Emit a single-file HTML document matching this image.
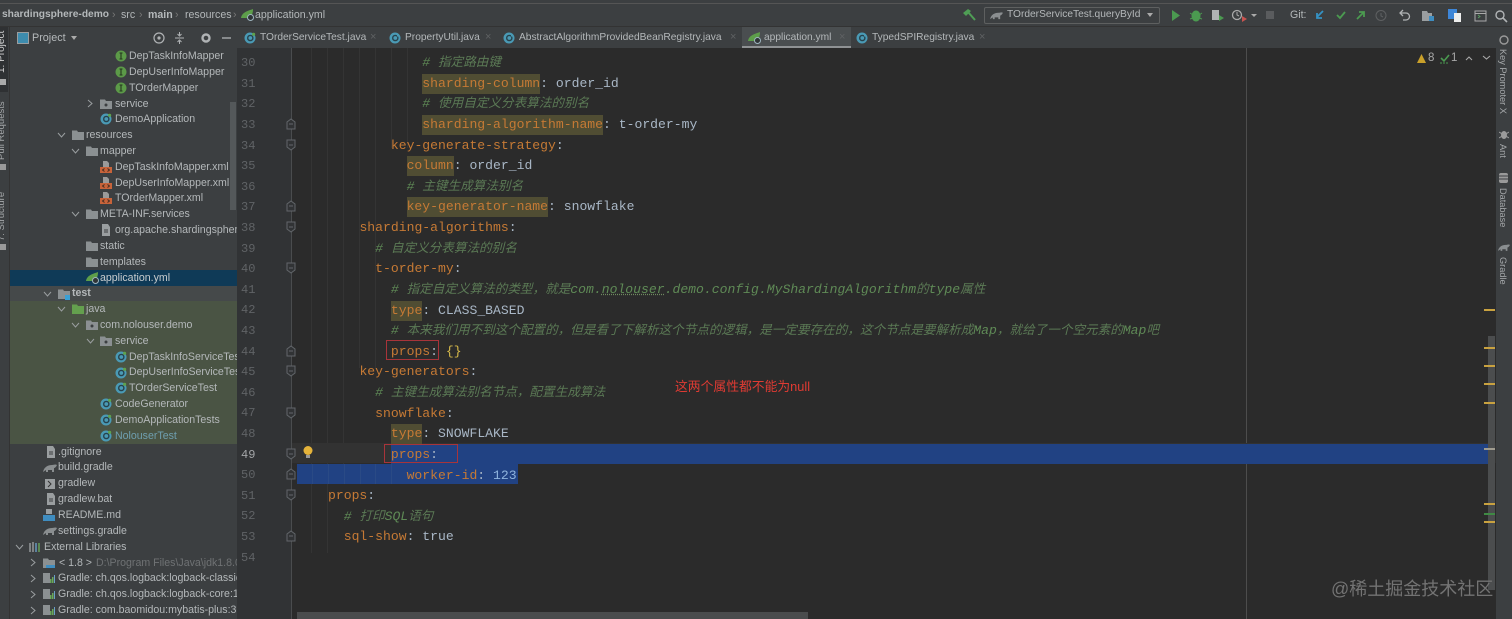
<!DOCTYPE html>
<html><head><meta charset="utf-8">
<style>
html,body{margin:0;padding:0;background:#3c3f41}
#a{position:relative;width:1512px;height:619px;overflow:hidden;background:#3c3f41;font-family:"Liberation Sans","Noto Sans CJK SC",sans-serif;filter:blur(.35px)}
.b{position:absolute}
.t{position:absolute;white-space:pre;font-size:10.6px;color:#b4b8ba;line-height:16px;height:16px}
.n{position:absolute;left:241px;font:12px/20px "Liberation Mono",monospace;color:#606366;width:20px;margin-top:1px}
#code{position:absolute;left:328px;top:53px;font:13.1px/20.625px "Liberation Mono","Noto Sans CJK SC",monospace;color:#a9b7c6}
#code div{height:20.625px;white-space:pre}
.k{color:#c67a35}
.h{background:#504d33;display:inline-block;height:20px;line-height:20px}
#code .c{color:#5f8a56;font-style:italic;position:relative;top:-2px}
.c i{font-size:12.6px;color:#5b7a55;font-family:"Noto Sans CJK SC",sans-serif}
.c u{text-decoration:underline dotted #6f8a60}
.g{position:absolute;width:1px;background:#343434;top:48px}
.r{position:absolute;border:1px solid #a8343a;box-sizing:border-box}
.m{position:absolute;left:1484px;width:11px;height:1.5px;background:#c9a240}
.v{position:absolute;transform-origin:0 0;white-space:pre;font-size:9.2px;color:#a5a8aa}
.x{position:absolute;top:31px;font-size:11px;color:#5f6163;line-height:12px}
.tb{font-size:10.2px}
</style></head><body><div id="a">
<svg width="0" height="0" style="position:absolute"><defs>
<symbol id="ci" viewBox="0 0 12 12"><circle cx="6" cy="6" r="5.5" fill="#4a9ab5"/><circle cx="6.3" cy="6" r="2.6" fill="none" stroke="#27424c" stroke-width="1.4"/><path d="M8 1.5l2 3h-2z" fill="#4a9ab5"/></symbol>
<symbol id="cg" viewBox="0 0 12 12"><circle cx="6" cy="6" r="5.5" fill="#4a9ab5"/><circle cx="6.3" cy="6" r="2.6" fill="none" stroke="#27424c" stroke-width="1.4"/><circle cx="9.6" cy="2.3" r="1.6" fill="#5ea24c"/></symbol>
<symbol id="ii" viewBox="0 0 12 12"><circle cx="6" cy="6" r="5.5" fill="#5c9a48"/><path d="M6 3v6M4.5 3h3M4.5 9h3" stroke="#25371f" stroke-width="1.1" fill="none"/></symbol>
<symbol id="fo" viewBox="0 0 12 12"><path d="M0 1.5h5l1 1.5h6v8H0z" fill="#8b9092"/></symbol>
<symbol id="pk" viewBox="0 0 12 12"><path d="M0 1.5h5l1 1.5h6v8H0z" fill="#8b9092"/><circle cx="6" cy="7" r="1.5" fill="#3c3f41"/></symbol>
<symbol id="xm" viewBox="0 0 12 12"><path d="M3 0h4l2 2v4H3z" fill="#9a9a9a"/><rect y="6" width="12" height="6" fill="#c8633a"/><path d="M4.5 7.5L2.5 9l2 1.5M7.5 7.5l2 1.5-2 1.5" stroke="#3c2a20" fill="none" stroke-width=".9"/></symbol>
<symbol id="sp" viewBox="0 0 14 12"><path d="M0 9C1 3 7 2 12 0c0 4-1 7-4 9H3z" fill="#5d9e4a"/><circle cx="9.5" cy="8.5" r="3" fill="#2f3436" stroke="#9fb6c0"/></symbol>
<symbol id="gr" viewBox="0 0 14 12"><path d="M0 10C1 5 5 3 9 3c2 0 3-1 5 0-1 2-2 3-3 3v4H9V8H5v2H3V8z" fill="#8a8e90"/></symbol>
<symbol id="fl" viewBox="0 0 12 12"><path d="M2 0h6l2 3v9H2z" fill="#9a9ea0"/><path d="M4 6h4M4 8h4" stroke="#3c3f41"/></symbol>
<symbol id="lib" viewBox="0 0 12 12"><path d="M0 1h7v10H0z" fill="#8b9092"/><path d="M7 7h1.5v4H7zM9 5h1.5v6H9z" fill="#6aa85a"/><path d="M11 3h1v8h-1z" fill="#6aa0c8"/></symbol>
</defs></svg>

<!-- top -->
<div class="b" style="left:0;top:3px;width:1512px;height:1px;background:#555"></div>
<div class="b" style="left:0;top:26px;width:1512px;height:1px;background:#333"></div>
<div class="t" style="left:2px;top:7px;font-weight:bold;font-size:10.2px">shardingsphere-demo</div>
<div class="t" style="left:112px;top:7px;color:#777">›</div>
<div class="t" style="left:121px;top:7px">src</div>
<div class="t" style="left:139px;top:7px;color:#777">›</div>
<div class="t" style="left:148px;top:7px;font-weight:bold">main</div>
<div class="t" style="left:175px;top:7px;color:#777">›</div>
<div class="t" style="left:185px;top:7px">resources</div>
<div class="t" style="left:233px;top:7px;color:#777">›</div>
<svg class="b" style="left:241px;top:9px" width="14" height="12"><use href="#sp"/></svg>
<div class="t" style="left:255px;top:7px">application.yml</div>

<svg class="b" style="left:962px;top:8px" width="14" height="13" viewBox="0 0 14 13"><path d="M1 5l5-4 3 2-5 5z" fill="#4f9e55"/><path d="M6 4l7 8" stroke="#4f9e55" stroke-width="2" fill="none"/></svg>
<div class="b" style="left:984px;top:7px;width:176px;height:17px;border:1px solid #5e6060;box-sizing:border-box;border-radius:2px"></div>
<svg class="b" style="left:990px;top:10px" width="13" height="11"><use href="#gr"/></svg>
<div class="t" style="left:1007px;top:7px;font-size:10.2px">TOrderServiceTest.queryById</div>
<div class="b" style="left:1147px;top:13px;border:3.5px solid transparent;border-top:4px solid #aaa"></div>
<svg class="b" style="left:1170px;top:8px" width="340" height="15" viewBox="0 0 340 15">
<path d="M2 2l8 5.5L2 13z" fill="#4b9a50"/>
<ellipse cx="26" cy="8" rx="4.5" ry="5.5" fill="#4b9a50"/><path d="M20 5l3 2M32 5l-3 2M20 11l3-1M32 11l-3-1" stroke="#4b9a50"/>
<path d="M42 2h7v10h-7z" fill="#b0b3b5"/><path d="M49 7l5 3-5 3z" fill="#4b9a50"/>
<circle cx="67" cy="7" r="4.5" fill="none" stroke="#aaa" stroke-width="1.3"/><path d="M67 4v3l2 1" stroke="#aaa" fill="none"/><path d="M72 8l5 3-5 3z" fill="#c75450"/><path d="M81 6h6l-3 3z" fill="#aaa"/>
<rect x="96" y="3" width="8" height="8" fill="#5a5c5e"/>
<path d="M153 3l-6 6M147 5v5h5" stroke="#3592c4" stroke-width="1.8" fill="none"/>
<path d="M167 7l3 3 5-6" stroke="#4b9a50" stroke-width="1.8" fill="none"/>
<path d="M187 11l7-7M189 4h5v5" stroke="#4b9a50" stroke-width="1.8" fill="none"/>
<circle cx="211" cy="7.5" r="5" fill="none" stroke="#5e6062"/><path d="M211 5v3l2 1" stroke="#5e6062" fill="none"/>
<path d="M231 5h5a3.5 3.5 0 0 1 0 7h-3M233 2l-3 3 3 3" stroke="#b0b3b5" stroke-width="1.3" fill="none"/>
<path d="M252 3h5l1 2h4v8h-10z" fill="#9a9ea0"/><rect x="259" y="8" width="5" height="5" fill="#3f8dc0"/>
<rect x="278" y="1" width="9" height="10" fill="#3d86d8"/><rect x="284" y="5" width="7" height="9" fill="#eee"/>
<rect x="305" y="3" width="11" height="10" fill="none" stroke="#aaa"/><path d="M305 5.5h11" stroke="#aaa"/><path d="M308 7l2 1.5-2 1.5" stroke="#5a9a60" fill="none"/>
<circle cx="330" cy="7" r="4" fill="none" stroke="#b0b3b5" stroke-width="1.4"/><path d="M333 10l4 4" stroke="#b0b3b5" stroke-width="1.6"/>
</svg>
<div class="t" style="left:1290px;top:7px;font-size:10.6px">Git:</div>

<!-- tabs -->
<div class="b" style="left:237px;top:27px;width:1259px;height:21px;background:#3c3f41"></div>
<div class="b" style="left:742px;top:27px;width:109px;height:19px;background:#4a4e50"></div>
<div class="b" style="left:742px;top:46px;width:109px;height:2px;background:#8f9294"></div>
<svg class="b" style="left:244px;top:32px" width="12" height="12"><use href="#cg"/></svg>
<div class="t tb" style="left:260px;top:30px">TOrderServiceTest.java</div><div class="x" style="left:370px">×</div>
<svg class="b" style="left:389px;top:32px" width="12" height="12"><use href="#ci"/></svg>
<div class="t tb" style="left:405px;top:30px">PropertyUtil.java</div><div class="x" style="left:485px">×</div>
<svg class="b" style="left:503px;top:32px" width="12" height="12"><use href="#ci"/></svg>
<div class="t tb" style="left:519px;top:30px">AbstractAlgorithmProvidedBeanRegistry.java</div><div class="x" style="left:730px">×</div>
<svg class="b" style="left:748px;top:32px" width="14" height="12"><use href="#sp"/></svg>
<div class="t tb" style="left:764px;top:30px">application.yml</div><div class="x" style="left:839px">×</div>
<svg class="b" style="left:856px;top:32px" width="12" height="12"><use href="#ci"/></svg>
<div class="t tb" style="left:872px;top:30px">TypedSPIRegistry.java</div><div class="x" style="left:979px">×</div>

<!-- left strip -->
<div class="b" style="left:0;top:27px;width:8px;height:65px;background:#2f3133"></div>
<div class="b" style="left:9px;top:27px;width:1px;height:592px;background:#333"></div>
<div class="v" style="left:-4px;top:73px;transform:rotate(-90deg);color:#d0d0d0;font-size:10px">1: Project</div>
<div class="b" style="left:0;top:79px;width:6px;height:6px;background:#aaa"></div>
<div class="v" style="left:-4px;top:160px;transform:rotate(-90deg);font-size:9.5px">Pull Requests</div>
<div class="b" style="left:0;top:164px;width:6px;height:6px;background:#999"></div>
<div class="v" style="left:-4px;top:241px;transform:rotate(-90deg);font-size:9.5px">7: Structure</div>
<div class="b" style="left:0;top:244px;width:6px;height:6px;background:#999"></div>

<!-- project header -->
<div class="b" style="left:10px;top:27px;width:227px;height:21px;background:#3c3f41"></div>
<div class="b" style="left:17px;top:32px;width:10px;height:10px;border:1px solid #9a9ea0;background:#3d8cae;box-sizing:content-box"></div>
<div class="t" style="left:32px;top:30px;font-size:10.8px">Project</div>
<div class="b" style="left:71px;top:36px;border:3px solid transparent;border-top:4px solid #aaa"></div>
<svg class="b" style="left:152px;top:31px" width="84" height="14" viewBox="0 0 84 14">
<circle cx="7" cy="7" r="5" fill="none" stroke="#b0b3b5" stroke-width="1.2"/><circle cx="7" cy="7" r="1.6" fill="#b0b3b5"/>
<path d="M23 7h9M27.5 1v3M25.5 3l2 2 2-2M27.5 13v-3M25.5 11l2-2 2 2" stroke="#b0b3b5" fill="none"/>
<circle cx="54" cy="7" r="3.5" fill="none" stroke="#b0b3b5" stroke-width="2.4"/>
<path d="M70 7h9" stroke="#b0b3b5" stroke-width="1.3"/>
</svg>

<!-- tree backgrounds -->
<div class="b" style="left:10px;top:270px;width:227px;height:16px;background:#0f3a57"></div>
<div class="b" style="left:10px;top:286px;width:227px;height:15px;background:#45494a"></div>
<div class="b" style="left:10px;top:301px;width:227px;height:143px;background:#4a5444"></div>
<div class="b" style="left:230px;top:102px;width:6px;height:108px;background:#54585a"></div>

<!-- tree -->
<svg class="b" style="left:115px;top:50px" width="12" height="12"><use href="#ii"/></svg><div class="t" style="left:129px;top:48px">DepTaskInfoMapper</div>
<svg class="b" style="left:115px;top:66px" width="12" height="12"><use href="#ii"/></svg><div class="t" style="left:129px;top:64px">DepUserInfoMapper</div>
<svg class="b" style="left:115px;top:82px" width="12" height="12"><use href="#ii"/></svg><div class="t" style="left:129px;top:80px">TOrderMapper</div>
<svg class="b" style="left:86px;top:99px" width="8" height="9"><path d="M2 1l4 3.5L2 8" stroke="#9a9ea0" fill="none"/></svg>
<svg class="b" style="left:100px;top:98px" width="12" height="12"><use href="#pk"/></svg><div class="t" style="left:115px;top:96px">service</div>
<svg class="b" style="left:100px;top:113px" width="12" height="12"><use href="#cg"/></svg><div class="t" style="left:115px;top:111px">DemoApplication</div>
<svg class="b" style="left:57px;top:131px" width="9" height="8"><path d="M1 2l3.5 4L8 2" stroke="#9a9ea0" fill="none"/></svg>
<svg class="b" style="left:72px;top:129px" width="12" height="12"><use href="#fo"/></svg><div class="t" style="left:86px;top:127px">resources</div>
<svg class="b" style="left:71px;top:147px" width="9" height="8"><path d="M1 2l3.5 4L8 2" stroke="#9a9ea0" fill="none"/></svg>
<svg class="b" style="left:86px;top:145px" width="12" height="12"><use href="#fo"/></svg><div class="t" style="left:100px;top:143px">mapper</div>
<svg class="b" style="left:100px;top:161px" width="12" height="12"><use href="#xm"/></svg><div class="t" style="left:115px;top:159px">DepTaskInfoMapper.xml</div>
<svg class="b" style="left:100px;top:177px" width="12" height="12"><use href="#xm"/></svg><div class="t" style="left:115px;top:175px">DepUserInfoMapper.xml</div>
<svg class="b" style="left:100px;top:192px" width="12" height="12"><use href="#xm"/></svg><div class="t" style="left:115px;top:190px">TOrderMapper.xml</div>
<svg class="b" style="left:71px;top:210px" width="9" height="8"><path d="M1 2l3.5 4L8 2" stroke="#9a9ea0" fill="none"/></svg>
<svg class="b" style="left:86px;top:208px" width="12" height="12"><use href="#fo"/></svg><div class="t" style="left:100px;top:206px">META-INF.services</div>
<svg class="b" style="left:100px;top:224px" width="12" height="12"><use href="#fl"/></svg><div class="t" style="left:115px;top:222px;width:122px;overflow:hidden">org.apache.shardingsphere</div>
<svg class="b" style="left:86px;top:240px" width="12" height="12"><use href="#fo"/></svg><div class="t" style="left:100px;top:238px">static</div>
<svg class="b" style="left:86px;top:256px" width="12" height="12"><use href="#fo"/></svg><div class="t" style="left:100px;top:254px">templates</div>
<svg class="b" style="left:86px;top:272px" width="14" height="12"><use href="#sp"/></svg><div class="t" style="left:100px;top:270px;color:#c8ccce">application.yml</div>
<svg class="b" style="left:43px;top:290px" width="9" height="8"><path d="M1 2l3.5 4L8 2" stroke="#9a9ea0" fill="none"/></svg>
<svg class="b" style="left:58px;top:288px" width="12" height="12"><use href="#fo"/><rect x="7" y="7" width="5" height="5" fill="#3aa0d5"/></svg><div class="t" style="left:72px;top:285px;font-weight:bold">test</div>
<svg class="b" style="left:57px;top:305px" width="9" height="8"><path d="M1 2l3.5 4L8 2" stroke="#9a9ea0" fill="none"/></svg>
<svg class="b" style="left:72px;top:303px" width="12" height="12"><path d="M0 1.5h5l1 1.5h6v8H0z" fill="#64a04e"/></svg><div class="t" style="left:86px;top:301px">java</div>
<svg class="b" style="left:71px;top:321px" width="9" height="8"><path d="M1 2l3.5 4L8 2" stroke="#9a9ea0" fill="none"/></svg>
<svg class="b" style="left:86px;top:319px" width="12" height="12"><use href="#pk"/></svg><div class="t" style="left:100px;top:317px">com.nolouser.demo</div>
<svg class="b" style="left:86px;top:337px" width="9" height="8"><path d="M1 2l3.5 4L8 2" stroke="#9a9ea0" fill="none"/></svg>
<svg class="b" style="left:100px;top:335px" width="12" height="12"><use href="#pk"/></svg><div class="t" style="left:115px;top:333px">service</div>
<svg class="b" style="left:115px;top:351px" width="12" height="12"><use href="#cg"/></svg><div class="t" style="left:129px;top:349px;width:108px;overflow:hidden">DepTaskInfoServiceTest</div>
<svg class="b" style="left:115px;top:367px" width="12" height="12"><use href="#cg"/></svg><div class="t" style="left:129px;top:364px;width:108px;overflow:hidden">DepUserInfoServiceTest</div>
<svg class="b" style="left:115px;top:382px" width="12" height="12"><use href="#cg"/></svg><div class="t" style="left:129px;top:380px">TOrderServiceTest</div>
<svg class="b" style="left:100px;top:398px" width="12" height="12"><use href="#cg"/></svg><div class="t" style="left:115px;top:396px">CodeGenerator</div>
<svg class="b" style="left:100px;top:414px" width="12" height="12"><use href="#cg"/></svg><div class="t" style="left:115px;top:412px">DemoApplicationTests</div>
<svg class="b" style="left:100px;top:430px" width="12" height="12"><use href="#cg"/></svg><div class="t" style="left:115px;top:428px;color:#6f9fb0">NolouserTest</div>
<svg class="b" style="left:45px;top:446px" width="12" height="12"><use href="#fl"/></svg><div class="t" style="left:58px;top:444px">.gitignore</div>
<svg class="b" style="left:43px;top:462px" width="14" height="12"><use href="#gr"/></svg><div class="t" style="left:58px;top:459px">build.gradle</div>
<svg class="b" style="left:45px;top:478px" width="12" height="12"><rect y="1" width="10" height="10" fill="#9a9ea0"/><path d="M3 3l3 3-3 3" stroke="#333" fill="none"/></svg><div class="t" style="left:58px;top:475px">gradlew</div>
<svg class="b" style="left:45px;top:493px" width="12" height="12"><use href="#fl"/></svg><div class="t" style="left:58px;top:491px">gradlew.bat</div>
<svg class="b" style="left:43px;top:509px" width="13" height="13"><rect x="3" y="0" width="6" height="5" fill="#9a9ea0"/><rect y="6" width="12" height="6" fill="#3f8dc0"/></svg><div class="t" style="left:58px;top:507px">README.md</div>
<svg class="b" style="left:43px;top:525px" width="14" height="12"><use href="#gr"/></svg><div class="t" style="left:58px;top:523px">settings.gradle</div>
<svg class="b" style="left:15px;top:543px" width="9" height="8"><path d="M1 2l3.5 4L8 2" stroke="#9a9ea0" fill="none"/></svg>
<svg class="b" style="left:29px;top:541px" width="12" height="12" viewBox="0 0 12 12"><path d="M1 2v9M4 1v10" stroke="#9a9ea0" stroke-width="1.4"/><path d="M7 2v9" stroke="#6aa0c8" stroke-width="1.4"/><path d="M10 2v9" stroke="#6aa85a" stroke-width="1.4"/></svg><div class="t" style="left:44px;top:539px">External Libraries</div>
<svg class="b" style="left:29px;top:558px" width="8" height="9"><path d="M2 1l4 3.5L2 8" stroke="#9a9ea0" fill="none"/></svg>
<svg class="b" style="left:43px;top:557px" width="13" height="13"><path d="M0 1.5h5l1 1.5h6v8H0z" fill="#8b9092"/><rect x="3" y="8" width="9" height="3" fill="#3f8dc0"/></svg><div class="t" style="left:59px;top:555px">&lt; 1.8 &gt;</div><div class="t" style="left:96px;top:555px;color:#6f7274;width:141px;overflow:hidden">D:\Program Files\Java\jdk1.8.0_</div>
<svg class="b" style="left:29px;top:574px" width="8" height="9"><path d="M2 1l4 3.5L2 8" stroke="#9a9ea0" fill="none"/></svg>
<svg class="b" style="left:43px;top:572px" width="12" height="12"><use href="#lib"/></svg><div class="t" style="left:58px;top:570px;width:179px;overflow:hidden">Gradle: ch.qos.logback:logback-classic:1</div>
<svg class="b" style="left:29px;top:590px" width="8" height="9"><path d="M2 1l4 3.5L2 8" stroke="#9a9ea0" fill="none"/></svg>
<svg class="b" style="left:43px;top:588px" width="12" height="12"><use href="#lib"/></svg><div class="t" style="left:58px;top:586px;width:179px;overflow:hidden">Gradle: ch.qos.logback:logback-core:1.2.3</div>
<svg class="b" style="left:29px;top:606px" width="8" height="9"><path d="M2 1l4 3.5L2 8" stroke="#9a9ea0" fill="none"/></svg>
<svg class="b" style="left:43px;top:604px" width="12" height="12"><use href="#lib"/></svg><div class="t" style="left:58px;top:602px;width:179px;overflow:hidden">Gradle: com.baomidou:mybatis-plus:3.4.0</div>

<!-- gutter + editor -->
<div class="b" style="left:237px;top:48px;width:54px;height:571px;background:#313335"></div>
<div class="b" style="left:291px;top:48px;width:1205px;height:571px;background:#2b2b2b"></div>
<div class="b" style="left:291px;top:48px;width:1px;height:571px;background:#4a4c4e"></div>
<div class="g" style="left:311px;height:505px"></div><div class="g" style="left:327px;height:505px"></div><div class="g" style="left:343px;height:425px"></div><div class="g" style="left:359px;height:320px"></div><div class="g" style="left:375px;height:320px"></div><div class="g" style="left:391px;height:100px"></div><div class="g" style="left:407px;height:100px"></div>
<div class="b" style="left:1246px;top:48px;width:1px;height:571px;background:#4d4d4d"></div>
<div class="b" style="left:292px;top:443px;width:1204px;height:20px;background:#323232"></div>
<div class="b" style="left:391px;top:444px;width:1104px;height:20px;background:#214283"></div>
<div class="b" style="left:297px;top:464px;width:221px;height:20px;background:#214283"></div>
<div class="b" style="left:312px;top:464px;width:1px;height:20px;background:#2a4a85"></div><div class="b" style="left:328px;top:464px;width:1px;height:20px;background:#2a4a85"></div><div class="b" style="left:344px;top:464px;width:1px;height:20px;background:#2a4a85"></div><div class="b" style="left:360px;top:464px;width:1px;height:20px;background:#2a4a85"></div><div class="b" style="left:375px;top:464px;width:1px;height:20px;background:#2a4a85"></div><div class="b" style="left:391px;top:464px;width:1px;height:20px;background:#2a4a85"></div>

<div class="n" style="top:52px">30</div><div class="n" style="top:73px">31</div><div class="n" style="top:93px">32</div><div class="n" style="top:114px">33</div><div class="n" style="top:135px">34</div><div class="n" style="top:155px">35</div><div class="n" style="top:176px">36</div><div class="n" style="top:196px">37</div><div class="n" style="top:217px">38</div><div class="n" style="top:238px">39</div><div class="n" style="top:258px">40</div><div class="n" style="top:279px">41</div><div class="n" style="top:299px">42</div><div class="n" style="top:320px">43</div><div class="n" style="top:341px">44</div><div class="n" style="top:361px">45</div><div class="n" style="top:382px">46</div><div class="n" style="top:402px">47</div><div class="n" style="top:423px">48</div><div class="n" style="top:444px;color:#a4a6a8">49</div><div class="n" style="top:464px">50</div><div class="n" style="top:485px">51</div><div class="n" style="top:505px">52</div><div class="n" style="top:526px">53</div><div class="n" style="top:547px">54</div>

<svg class="b" style="left:284px;top:48px" width="14" height="515" viewBox="0 0 14 515">
<g fill="#313335" stroke="#62666a">
<path d="M3 81h8v-7l-4-3-4 3z"/><path d="M5 76h4"/>
<path d="M3 92h8v7l-4 3-4-3z"/><path d="M5 97h4"/>
<path d="M3 163h8v-7l-4-3-4 3z"/><path d="M5 158h4"/>
<path d="M3 174h8v7l-4 3-4-3z"/><path d="M5 179h4"/>
<path d="M3 215h8v7l-4 3-4-3z"/><path d="M5 220h4"/>
<path d="M3 308h8v-7l-4-3-4 3z"/><path d="M5 303h4"/>
<path d="M3 318h8v7l-4 3-4-3z"/><path d="M5 323h4"/>
<path d="M3 360h8v7l-4 3-4-3z"/><path d="M5 365h4"/>
<path d="M3 401h8v7l-4 3-4-3z"/><path d="M5 406h4"/>
<path d="M3 431h8v-7l-4-3-4 3z"/><path d="M5 426h4"/>
<path d="M3 442h8v7l-4 3-4-3z"/><path d="M5 447h4"/>
<path d="M3 493h8v-7l-4-3-4 3z"/><path d="M5 488h4"/>
</g>
</svg>
<svg class="b" style="left:302px;top:445px" width="12" height="15" viewBox="0 0 12 15"><circle cx="6" cy="5.5" r="4.5" fill="#e5b33a"/><rect x="4" y="10" width="4" height="3" fill="#999"/></svg>

<div id="code">
<div class="c">            # <i>指定路由键</i></div>
<div>            <span class="k h">sharding-column</span>: order_id</div>
<div class="c">            # <i>使用自定义分表算法的别名</i></div>
<div>            <span class="k h">sharding-algorithm-name</span>: t-order-my</div>
<div>        <span class="k">key-generate-strategy</span>:</div>
<div>          <span class="k h">column</span>: order_id</div>
<div class="c">          # <i>主键生成算法别名</i></div>
<div>          <span class="k h">key-generator-name</span>: snowflake</div>
<div>    <span class="k">sharding-algorithms</span>:</div>
<div class="c">      # <i>自定义分表算法的别名</i></div>
<div>      <span class="k">t-order-my</span>:</div>
<div class="c">        # <i>指定自定义算法的类型，就是</i>com.<u>nolouser</u>.demo.config.MyShardingAlgorithm<i>的</i>type<i>属性</i></div>
<div>        <span class="k h">type</span>: CLASS_BASED</div>
<div class="c">        # <i>本来我们用不到这个配置的，但是看了下解析这个节点的逻辑，是一定要存在的，这个节点是要解析成</i>Map<i>，就给了一个空元素的</i>Map<i>吧</i></div>
<div>        <span class="k">props</span>: <span style="color:#d6b94a">{}</span></div>
<div>    <span class="k">key-generators</span>:</div>
<div class="c">      # <i>主键生成算法别名节点，配置生成算法</i></div>
<div>      <span class="k">snowflake</span>:</div>
<div>        <span class="k h">type</span>: SNOWFLAKE</div>
<div>        <span class="k">props</span>:</div>
<div>          <span class="k">worker-id</span>: <span style="color:#8fb3dd">123</span></div>
<div><span class="k">props</span>:</div>
<div class="c">  # <i>打印</i>SQL<i>语句</i></div>
<div>  <span class="k">sql-show</span>: true</div>
</div>

<div class="r" style="left:386px;top:340px;width:53px;height:20px"></div>
<div class="r" style="left:384px;top:444px;width:74px;height:19px"></div>
<div class="b" style="left:675px;top:378px;font-size:12.8px;line-height:17px;color:#df3b33;white-space:pre;font-family:'Liberation Sans','Noto Sans CJK SC',sans-serif">这两个属性都不能为null</div>

<!-- right -->
<svg class="b" style="left:1416px;top:52px" width="62" height="13" viewBox="0 0 62 13">
<path d="M1 11L5.5 2 10 11z" fill="#c9a02a"/>
<path d="M25 6l3 3 5-6" stroke="#4b9a50" stroke-width="1.6" fill="none"/><path d="M24 11h9" stroke="#4b9a50" stroke-dasharray="2 1"/>
<path d="M50 8l3-3 3 3" stroke="#a9a9a9" fill="none" stroke-width="1.1"/></svg>
<svg class="b" style="left:1482px;top:54px" width="10" height="9"><path d="M1 2l3.5 3L8 2" stroke="#a9a9a9" fill="none" stroke-width="1.1"/></svg>
<div class="t" style="left:1428px;top:50px;color:#a9a9a9;font-size:11.5px">8</div>
<div class="t" style="left:1451px;top:50px;color:#a9a9a9;font-size:11.5px">1</div>

<div class="b" style="left:1488px;top:336px;width:7px;height:254px;background:#4b4d4e"></div>
<div class="m" style="top:309px"></div><div class="m" style="top:347px"></div><div class="m" style="top:365px"></div><div class="m" style="top:383px"></div><div class="m" style="top:402px"></div><div class="m" style="top:448px;background:#a09c90"></div><div class="m" style="top:503px"></div><div class="m" style="top:513px;background:#3f8a44"></div><div class="m" style="top:521px"></div>
<div class="b" style="left:297px;top:612px;width:511px;height:7px;background:#4a4c4d"></div>

<div class="b" style="left:1496px;top:48px;width:16px;height:571px;background:#3c3f41"></div>
<svg class="b" style="left:1499px;top:35px" width="10" height="10"><circle cx="5" cy="5" r="4" fill="none" stroke="#9a9a9a" stroke-width="1.4"/></svg>
<div class="v" style="left:1498px;top:49px;transform:rotate(90deg) translateY(-10px);">Key Promoter X</div>
<svg class="b" style="left:1499px;top:129px" width="10" height="11"><ellipse cx="5" cy="6" rx="3" ry="4" fill="#9a9a9a"/><path d="M0 3l10 6M10 3L0 9" stroke="#9a9a9a"/></svg>
<div class="v" style="left:1498px;top:144px;transform:rotate(90deg) translateY(-10px)">Ant</div>
<svg class="b" style="left:1499px;top:173px" width="10" height="11"><rect width="9" height="10" rx="2" fill="#9a9a9a"/><path d="M0 3h9M0 6h9" stroke="#3c3f41"/></svg>
<div class="v" style="left:1498px;top:188px;transform:rotate(90deg) translateY(-10px)">Database</div>
<svg class="b" style="left:1498px;top:242px" width="12" height="11"><use href="#gr"/></svg>
<div class="v" style="left:1498px;top:257px;transform:rotate(90deg) translateY(-10px)">Gradle</div>

<div class="b" style="left:1331px;top:577px;font-size:18px;line-height:24px;color:#737373;white-space:pre;font-family:'Liberation Sans','Noto Sans CJK SC',sans-serif">@稀土掘金技术社区</div>
</div></body></html>
